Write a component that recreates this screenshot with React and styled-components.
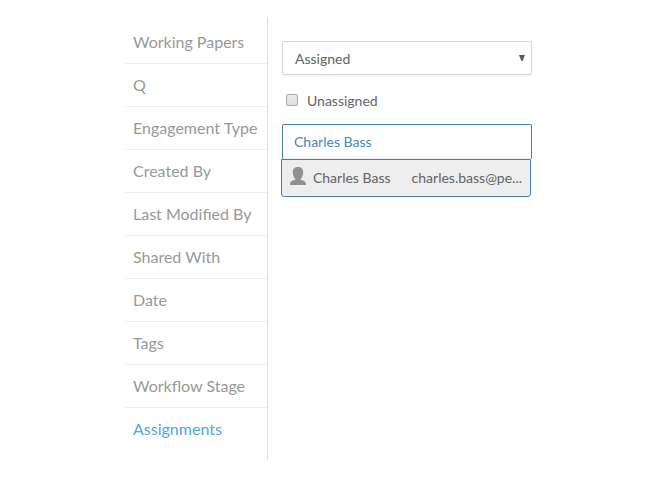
import React from "react";
import styled, { createGlobalStyle } from "styled-components";

const GlobalStyle = createGlobalStyle`
  *, *::before, *::after { box-sizing: border-box; }
  body {
    margin: 0;
    background: #fff;
    font-family: Lato, "Liberation Sans", sans-serif;
    overflow: hidden;
  }
`;

const Page = styled.main`
  display: flex;
  width: 669px;
  height: 478px;
  padding: 17px 0 0 125px;
`;

const Sidebar = styled.nav`
  width: 143px;
  height: 443px;
  padding-top: 4px;
  border-right: 1px solid #dedede;
`;

const FilterList = styled.ul`
  margin: 0;
  padding: 0;
  list-style: none;
`;

const FilterItem = styled.li`
  height: 43px;
  padding-left: 8px;
  border-bottom: 1px solid #f0f0f0;
  color: ${({ $active }) => ($active ? "#4fa8e2" : "#999")};
  font-size: 16px;
  line-height: 42px;
  white-space: nowrap;
  cursor: pointer;

  &:last-child { border-bottom: 0; }
`;

const Panel = styled.section`
  display: flex;
  flex-direction: column;
  width: 250px;
  margin-left: 14px;
  padding-top: 24px;
  color: #646464;
  font-size: 14px;
`;

const SelectBox = styled.div`
  display: flex;
  align-items: center;
  justify-content: space-between;
  height: 34px;
  padding: 0 6px 0 12px;
  border: 1px solid #d9d9d9;
  border-radius: 2px;
  box-shadow: 0 1px 3px rgba(0, 0, 0, 0.08);
`;

const Arrow = styled.svg`
  width: 6px;
  height: 6px;
  fill: #5c5c5c;
`;

const CheckRow = styled.label`
  display: flex;
  align-items: center;
  gap: 9px;
  height: 17px;
  margin: 17px 0 15px 4px;
`;

const Checkbox = styled.input`
  appearance: none;
  width: 12px;
  height: 12px;
  margin: -1px 0 0;
  border: 1px solid #ababab;
  border-radius: 2px;
  background: linear-gradient(#ededed, #dcdcdc);
`;

const SearchInput = styled.input`
  width: 250px;
  height: 35px;
  padding: 0 11px 1px;
  border: 1px solid #3d82b0;
  border-bottom-color: #eee;
  border-radius: 2px 2px 0 0;
  outline: 0;
  background: #fff;
  color: #4489b8;
  font: inherit;
`;

const Suggestion = styled.div`
  display: flex;
  align-items: center;
  width: 250px;
  height: 38px;
  margin-left: -1px;
  padding: 0 8px 2px;
  border: 1px solid #3d82b0;
  border-radius: 0 0 3px 3px;
  background: #eee;
`;

const PersonIcon = styled.svg`
  width: 16px;
  height: 18px;
  margin: -2px 7px 0 0;
  fill: #919191;
`;

const Name = styled.span`
  width: 99px;
`;

const Email = styled.span`
  white-space: nowrap;
`;

const filters = [
  "Working Papers",
  "Q",
  "Engagement Type",
  "Created By",
  "Last Modified By",
  "Shared With",
  "Date",
  "Tags",
  "Workflow Stage",
  "Assignments",
];

export default function App() {
  return (
    <>
      <GlobalStyle />
      <Page>
        <Sidebar>
          <FilterList>
            {filters.map((name) => (
              <FilterItem key={name} $active={name === "Assignments"}>
                {name}
              </FilterItem>
            ))}
          </FilterList>
        </Sidebar>
        <Panel>
          <SelectBox>
            <span>Assigned</span>
            <Arrow viewBox="0 0 6 6">
              <path d="M0 0h6L3.600 6H2.400z" />
            </Arrow>
          </SelectBox>
          <CheckRow>
            <Checkbox type="checkbox" />
            Unassigned
          </CheckRow>
          <SearchInput defaultValue="Charles Bass" />
          <Suggestion>
            <PersonIcon viewBox="0 0 16 18">
              <path d="M8 0C4.800 0 2.800 2 2.800 5c0 2.500.6 5.500 2.900 7.200C4.500 13.100 0 13.700 0 16.800V18h16v-1.200c0-3.100-4.500-3.700-5.700-4.600C12.600 10.500 13.200 7.500 13.200 5c0-3-2-5-5.200-5z" />
            </PersonIcon>
            <Name>Charles Bass</Name>
            <Email>charles.bass@pe...</Email>
          </Suggestion>
        </Panel>
      </Page>
    </>
  );
}
